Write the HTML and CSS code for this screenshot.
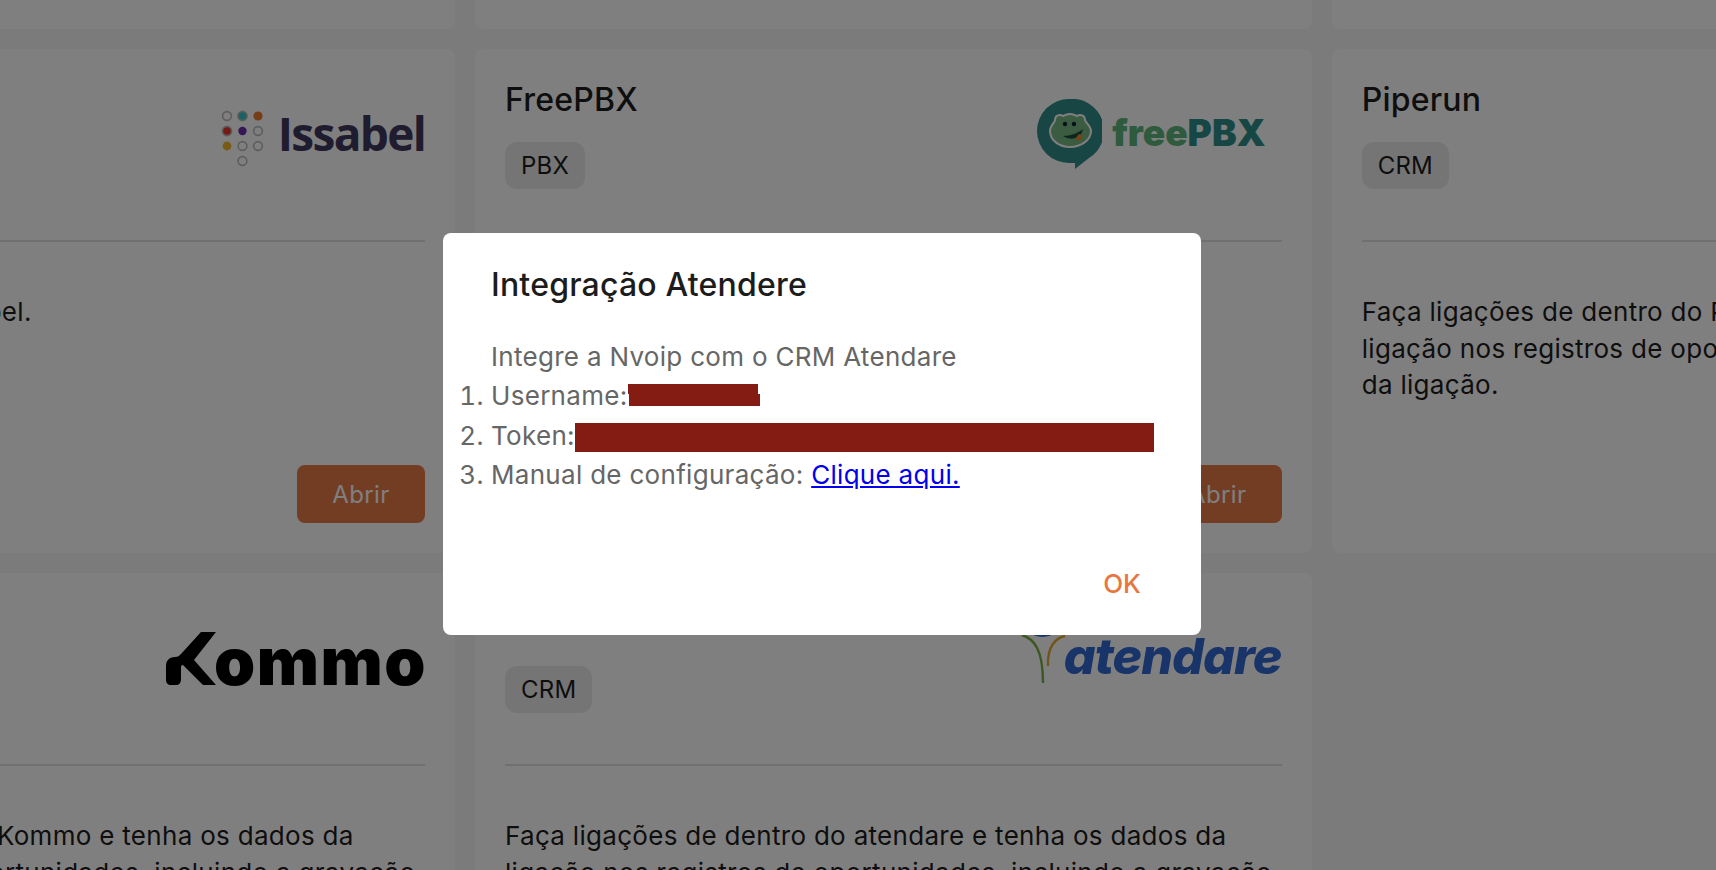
FILE: index.html
```html
<!DOCTYPE html>
<html lang="pt-BR">
<head>
    <meta charset="UTF-8">
    <meta name="viewport" content="width=device-width, initial-scale=1.0">
    <title>Integrações</title>
    <link rel="stylesheet" href="styles.css">
</head>
<body>
    <div class="grid">
        <div class="card"></div>
        <div class="card"></div>
        <div class="card"></div>

        <!-- Issabel -->
        <div class="card">
            <div class="card-head">
                <div>
                    <h3>Issabel</h3>
                    <span class="tag">PBX</span>
                </div>
                <div class="logo logo-dots">
                    <svg class="dots" width="46" height="60" viewBox="0 0 46 60">
                        <circle cx="6" cy="6" r="4.4" fill="none" stroke="#bbb" stroke-width="1.6"/>
                        <circle cx="21.5" cy="6" r="4.6" fill="#35c4c4" stroke="#bbb" stroke-width="1.6"/>
                        <circle cx="37" cy="6" r="4.6" fill="#ec7a2e"/>
                        <circle cx="6" cy="21" r="4.6" fill="#e8362f" stroke="#bbb" stroke-width="1.6"/>
                        <circle cx="21.5" cy="21" r="4.2" fill="#6a2eb0"/>
                        <circle cx="37" cy="21" r="4.4" fill="none" stroke="#bbb" stroke-width="1.6"/>
                        <circle cx="6" cy="36" r="4.4" fill="#f0b82a"/>
                        <circle cx="21.5" cy="36" r="4.4" fill="none" stroke="#bbb" stroke-width="1.6"/>
                        <circle cx="37" cy="36" r="4.4" fill="none" stroke="#bbb" stroke-width="1.6"/>
                        <circle cx="21.5" cy="51" r="4.4" fill="none" stroke="#bbb" stroke-width="1.6"/>
                    </svg>
                    <span class="logo-issabel">Issabel</span>
                </div>
            </div>
            <hr>
            <p class="desc">Integração com o PBX Issabel.</p>
            <div class="card-foot"><button class="btn">Abrir</button></div>
        </div>

        <!-- FreePBX -->
        <div class="card">
            <div class="card-head">
                <div>
                    <h3>FreePBX</h3>
                    <span class="tag">PBX</span>
                </div>
                <div class="logo logo-pbx">
                    <svg class="frog" width="66" height="70" viewBox="0 0 66 70">
                        <path d="M33 0a32 32 0 0 0 0 64h6v6l14-11A32 32 0 0 0 33 0z" fill="#2f8c8a"/>
                        <path d="M34 15c-3 0-5 1-7 2-3-2-8-1-8 4 0 2-5 6-5 11 0 9 9 16 20 16s21-7 21-16c0-5-6-9-6-11 0-5-5-6-8-4-2-1-4-2-7-2z" fill="#78b884" stroke="#fff" stroke-width="2"/>
                        <circle cx="29" cy="25" r="2.2" fill="#123"/>
                        <circle cx="38" cy="25" r="2.2" fill="#123"/>
                        <path d="M27 37c8 5 18 3 20-7-5 4-12 7-20 7z" fill="#1d4a3a"/>
                        <path d="M39 40l4-5 3 1-2 6z" fill="#ee8a2a"/>
                    </svg>
                    <span class="logo-free">free<b>PBX</b></span>
                </div>
            </div>
            <hr>
            <p class="desc">Integração com o PBX FreePBX.</p>
            <div class="card-foot"><button class="btn">Abrir</button></div>
        </div>

        <!-- Piperun -->
        <div class="card">
            <div class="card-head">
                <div>
                    <h3>Piperun</h3>
                    <span class="tag">CRM</span>
                </div>
            </div>
            <hr>
            <p class="desc">Faça ligações de dentro do Piperun e tenha os dados da ligação nos registros de oportunidades, incluindo a gravação da ligação.</p>
        </div>

        <!-- Kommo -->
        <div class="card">
            <div class="card-head">
                <div>
                    <h3>Kommo</h3>
                    <span class="tag">CRM</span>
                </div>
                <div class="logo logo-base">
                    <svg width="50" height="54" viewBox="0 0 50 54">
                        <path d="M35 1H50L28 29 50 54H37L18 35c-2-2-3-1-3 2V48c0 4-2 6-5 6H5c-3 0-5-2-5-5V35c0-6 4-9 9-9 3 0 4-1 6-3z" fill="#000"/>
                    </svg>
                    <span class="logo-kommo">ommo</span>
                </div>
            </div>
            <hr>
            <p class="desc">Faça ligações de dentro do Kommo e tenha os dados da ligação nos registros de oportunidades, incluindo a gravação da ligação.</p>
        </div>

        <!-- Atendare -->
        <div class="card">
            <div class="card-head">
                <div>
                    <h3>Atendare</h3>
                    <span class="tag">CRM</span>
                </div>
                <div class="logo logo-tight">
                    <svg class="mark" width="46" height="58" viewBox="0 0 46 58">
                        <path d="M2 9c12 4 21 14 21 48" fill="none" stroke="#78b040" stroke-width="2.4"/>
                        <path d="M45 10c-9 2-18 10-17 30" fill="none" stroke="#e0a830" stroke-width="2.4"/>
                        <path d="M11 6c5 5 18 5 23 0" fill="none" stroke="#3068d0" stroke-width="2.4"/>
                    </svg>
                    <span class="logo-atendare">atendare</span>
                </div>
            </div>
            <hr>
            <p class="desc">Faça ligações de dentro do atendare e tenha os dados da ligação nos registros de oportunidades, incluindo a gravação da ligação.</p>
        </div>
    </div>

    <div class="overlay">
        <div class="dialog">
            <h2>Integração Atendere</h2>
            <p class="intro">Integre a Nvoip com o CRM Atendare</p>
            <ol>
                <li>Username:<span class="redact redact-user"><i></i><i></i></span></li>
                <li>Token:<span class="redact redact-token"></span></li>
                <li>Manual de configuração: <a href="#">Clique aqui.</a></li>
            </ol>
            <div class="dialog-foot"><button class="btn-text">OK</button></div>
        </div>
    </div>
</body>
</html>
```

FILE: styles.css
```css
html, body {
    height: 100%;
}
body {
    margin: 0;
    overflow: hidden;
    background-color: #f6f6f6;
    color: #1c1c1c;
    font-family: Inter, "Noto Sans", sans-serif;
}
.grid {
    display: grid;
    grid-template-columns: repeat(3, 836.7px);
    grid-auto-rows: 504px;
    gap: 20px;
    margin: -475px 0 0 -381.7px;
}
.card {
    display: flex;
    flex-direction: column;
    box-sizing: border-box;
    padding: 30px;
    background: white;
    border-radius: 8px;
}
.card-head {
    display: flex;
    justify-content: space-between;
    height: 161px;
}
h3 {
    margin: 0 0 22px;
    padding-top: 1px;
    font-size: 32px;
    line-height: 40px;
    font-weight: 500;
    letter-spacing: 0.2px;
}
.tag {
    display: inline-block;
    padding: 0 16px;
    line-height: 47px;
    font-size: 24px;
    letter-spacing: 0.2px;
    background: #eaeaea;
    border-radius: 12px;
}
hr {
    width: 100%;
    margin: 0;
    border: none;
    border-top: 2px solid #e0e0e0;
}
.desc {
    margin: 52px 0 0;
    font-size: 26px;
    line-height: 36.7px;
    letter-spacing: 0.3px;
}
.card-foot {
    margin-top: auto;
    display: flex;
    justify-content: flex-end;
}
.btn {
    width: 128px;
    height: 58px;
    border: none;
    border-radius: 8px;
    background: #e67a46;
    color: white;
    font: 24px Inter, sans-serif;
    letter-spacing: 0.4px;
}
.logo {
    display: flex;
    align-items: center;
    height: 78px;
    gap: 16px;
    margin-top: 16px;
}
.logo-dots {
    gap: 10.5px;
    margin-top: 15px;
}
.logo-pbx {
    gap: 10px;
    margin-right: 16px;
    margin-top: 16px;
}
.logo-base {
    align-items: baseline;
    gap: 0;
    margin-top: 19px;
}
.logo-tight {
    gap: 0;
    margin-top: 14px;
}
.dots {
    margin-top: 14px;
}
.mark {
    margin: -2px -2px 0 0;
}
.logo-issabel {
    font: 700 46px "Open Sans", sans-serif;
    letter-spacing: -1.7px;
    color: #3e3860;
}
.logo-free {
    font: 900 37px/40px Inter, sans-serif;
    margin-top: -2px;
    color: #5cb47c;
}
.logo-free b {
    color: #2f8e8a;
}
.logo-kommo {
    font: 900 66px/78px Inter, sans-serif;
    letter-spacing: 1.5px;
    color: #000;
    margin: 0 -2px 0 -2px;
}
.logo-atendare {
    font: italic 800 50px Inter, sans-serif;
    letter-spacing: -0.9px;
    color: #3068d0;
}
.overlay {
    position: fixed;
    inset: 0;
    background: rgba(0, 0, 0, 0.5);
}
.dialog {
    position: absolute;
    left: 443px;
    top: 233px;
    width: 758px;
    height: 402px;
    box-sizing: border-box;
    padding: 30px 48px 0;
    background: white;
    border-radius: 8px;
    display: flex;
    flex-direction: column;
}
h2 {
    margin: 0 0 30px;
    font-size: 32px;
    line-height: 44px;
    font-weight: 500;
    letter-spacing: 0.2px;
    color: #1c1c1c;
}
.intro, ol {
    font-size: 26px;
    line-height: 39.4px;
    letter-spacing: 0.3px;
    color: #666;
}
.intro {
    margin: 0;
}
ol {
    margin: 0;
    padding: 0;
}
li {
    white-space: nowrap;
}
a {
    color: #0000ee;
}
.redact {
    display: inline-block;
    vertical-align: middle;
    background: #851c14;
}
.redact-user {
    width: 132px;
    height: 22px;
    vertical-align: -1px;
    background: none;
}
.redact-user i {
    display: block;
    width: 130px;
    height: 10px;
    background: #851c14;
}
.redact-user i + i {
    width: 131px;
    height: 12px;
    margin-left: 1px;
}
.redact-token {
    width: 579px;
    height: 29px;
}
.dialog-foot {
    margin-top: auto;
    padding: 0 0 28px;
    display: flex;
    justify-content: flex-end;
}
.btn-text {
    border: none;
    background: none;
    padding: 8px 12px;
    font: 500 26px Inter, sans-serif;
    color: #e8773f;
}
```
